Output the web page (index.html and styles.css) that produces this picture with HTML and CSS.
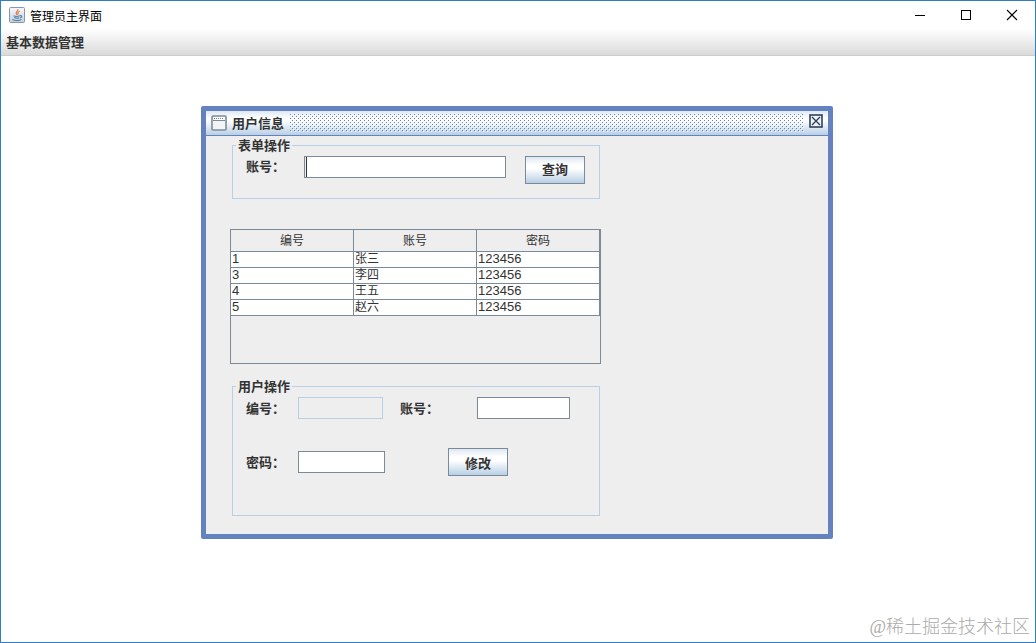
FILE: index.html
```html
<!DOCTYPE html>
<html lang="zh-CN">
<head>
<meta charset="utf-8">
<meta name="viewport" content="width=device-width, initial-scale=1">
<title>管理员主界面</title>
<link rel="stylesheet" href="styles.css">
</head>
<body>
<div class="app">
  <header class="titlebar">
    <svg class="app-icon" width="17" height="17" viewBox="0 0 17 17" aria-hidden="true">
      <defs>
        <linearGradient id="tile" x1="0" y1="0" x2="0" y2="1">
          <stop offset="0" stop-color="#f6f8fa"/><stop offset="1" stop-color="#c3d0dc"/>
        </linearGradient>
      </defs>
      <rect x="0.5" y="0.5" width="15" height="15" rx="1" fill="url(#tile)" stroke="#8797a6"/>
      <path d="M8.8 2.2C9.6 4 6.4 4.8 7.3 6.6L8.3 8M10.6 4.3C8.8 5 8.6 6 9.3 7.4" fill="none" stroke="#e2773a" stroke-width="1.2"/>
      <path d="M4.6 8.8C6 9.6 9 9.5 10.8 8.8M5.2 10.6C7 11.4 8.8 11.3 10.2 10.7M3.4 12.6C6 14 10.6 13.8 12.4 12.4M11 8.7C13.4 8.2 13.2 10.4 11 11" fill="none" stroke="#4d7ea8" stroke-width="1.1"/>
    </svg>
    <h1 class="app-title">管理员主界面</h1>
    <div class="window-buttons">
      <button class="window-button" type="button" aria-label="最小化"><svg width="12" height="12" viewBox="0 0 12 12"><path d="M1 6.5H11" stroke="#000"/></svg></button>
      <button class="window-button" type="button" aria-label="最大化"><svg width="12" height="12" viewBox="0 0 12 12"><rect x="1.5" y="1.5" width="9" height="9" fill="none" stroke="#000"/></svg></button>
      <button class="window-button" type="button" aria-label="关闭"><svg width="12" height="12" viewBox="0 0 12 12"><path d="M1 1L11 11M11 1L1 11" stroke="#000" stroke-width="1.1"/></svg></button>
    </div>
  </header>
  <nav class="menubar"><button class="menu" type="button">基本数据管理</button></nav>
  <main class="desktop">
    <section class="frame">
      <div class="frame-title">
        <svg class="frame-icon" width="16" height="16" viewBox="0 0 16 16" aria-hidden="true">
          <rect x="1" y="1" width="14" height="14" rx="1" fill="#fff" stroke="#7a8a99" stroke-width="1.6"/>
          <path d="M2 5.5H14" stroke="#7a8a99"/>
          <path d="M3 3.5H13" stroke="#7a8a99" stroke-dasharray="1 1"/>
          <path d="M2 6h12v8H2z" fill="#f3f4f5"/>
        </svg>
        <h2 class="frame-name">用户信息</h2>
        <svg class="bumps" aria-hidden="true">
          <defs>
            <pattern id="dots" width="4" height="4" patternUnits="userSpaceOnUse">
              <path d="M1 1h1v1H1zM3 3h1v1H3z" fill="#fff"/>
              <path d="M0 0h1v1H0zM2 2h1v1H2z" fill="#6382bf"/>
            </pattern>
          </defs>
          <rect width="100%" height="100%" fill="url(#dots)"/>
        </svg>
        <button class="frame-close" type="button" aria-label="关闭用户信息">
          <svg width="14" height="14" viewBox="0 0 14 14"><rect x="1" y="1" width="12" height="12" fill="#eef4fa" stroke="#30405c" stroke-width="1.6"/><path d="M3 3L11 11M11 3L3 11" stroke="#30405c" stroke-width="1.4"/></svg>
        </button>
      </div>
      <div class="frame-body">
        <fieldset class="group search-group">
          <legend>表单操作</legend>
          <div class="row search-row">
            <label class="label-wide" for="query">账号：</label>
            <input class="field query-field" id="query" type="text">
            <button class="button" type="button">查询</button>
          </div>
        </fieldset>
        <div class="table-pane">
          <table class="users">
            <thead><tr><th scope="col">编号</th><th scope="col">账号</th><th scope="col">密码</th></tr></thead>
            <tbody>
              <tr><td>1</td><td class="name">张三</td><td>123456</td></tr>
              <tr><td>3</td><td class="name">李四</td><td>123456</td></tr>
              <tr><td>4</td><td class="name">王五</td><td>123456</td></tr>
              <tr><td>5</td><td class="name">赵六</td><td>123456</td></tr>
            </tbody>
          </table>
        </div>
        <fieldset class="group user-group">
          <legend>用户操作</legend>
          <div class="row">
            <label class="label" for="uid">编号：</label>
            <input class="field id-field" id="uid" type="text" disabled>
            <label class="label-account" for="account">账号：</label>
            <input class="field account-field" id="account" type="text">
          </div>
          <div class="row action-row">
            <label class="label" for="password">密码：</label>
            <input class="field password-field" id="password" type="text">
            <button class="button" type="button">修改</button>
          </div>
        </fieldset>
      </div>
    </section>
  </main>
  <div class="watermark">@稀土掘金技术社区</div>
</div>
</body>
</html>
```

FILE: styles.css
```css
* {
  box-sizing: border-box;
}

body {
  margin: 0;
  color: #333;
  font-family: "Liberation Sans", "Noto Sans CJK SC", sans-serif;
  font-size: 13px;
}

h1,
h2 {
  margin: 0;
}

button,
input {
  font: inherit;
  color: inherit;
}

svg {
  display: block;
}

.app {
  position: relative;
  display: flex;
  flex-direction: column;
  min-height: 100vh;
  border: 1px solid #2f80c2;
  background: #fff;
}

.titlebar {
  display: flex;
  align-items: center;
  height: 28px;
  padding-left: 8px;
}

.app-icon {
  margin-right: 4px;
}

.app-title {
  flex: 1;
  color: #000;
  font-size: 12px;
  font-weight: 400;
}

.window-buttons {
  display: flex;
}

.window-button {
  display: flex;
  align-items: center;
  justify-content: center;
  width: 46px;
  height: 28px;
  padding: 0;
  border: 0;
  background: none;
}

.menubar {
  display: flex;
  align-items: center;
  height: 27px;
  padding-bottom: 2px;
  border-bottom: 1px solid #ccc;
  background: linear-gradient(#fff, #dadada);
}

.menu {
  padding: 0 5px;
  border: 0;
  background: none;
  font-weight: 700;
}

.desktop {
  position: relative;
  flex: 1;
}

.frame {
  position: absolute;
  top: 50px;
  left: 200px;
  width: 632px;
  border: 5px solid #6382bf;
  border-radius: 2px;
  background: #eee;
}

.frame-title {
  display: flex;
  align-items: center;
  height: 25px;
  padding: 0 5px;
  border-bottom: 1px solid #6382bf;
  background: linear-gradient(#dde8f3, #fff 30%, #fff 40%, #b8cfe5);
}

.frame-name {
  margin: 0 6px 0 5px;
  padding-bottom: 2px;
  font-size: 13px;
  font-weight: 700;
}

.bumps {
  flex: 1;
  min-width: 0;
  height: 18px;
}

.frame-close {
  margin: 0 0 4px 5px;
  padding: 0;
  border: 0;
  background: none;
}

.frame-body {
  padding: 0 227px 18px 24px;
}

.group {
  min-width: 0;
  margin: 0 1px 0 2px;
  padding: 1px 0 0 13px;
  border: 1px solid #b8cfe5;
}

.group legend {
  margin-left: -10px;
  padding: 0 2px;
  font-weight: 700;
  line-height: 19px;
}

.search-group {
  padding-bottom: 14px;
}

.user-group {
  padding-bottom: 39px;
}

.row {
  display: flex;
  align-items: center;
  min-height: 22px;
  font-weight: 700;
}

.search-row {
  align-items: flex-start;
  line-height: 22px;
}

.action-row {
  margin-top: 29px;
}

.label {
  width: 52px;
  padding-bottom: 2px;
}

.label-wide {
  width: 58px;
}

.label-account {
  width: 77px;
  margin-left: 17px;
  padding-bottom: 2px;
}

.field {
  height: 22px;
  padding: 0 2px;
  border: 1px solid #7a8a99;
  background: #fff;
  font-weight: 400;
}

.field:disabled {
  border-color: #b8cfe5;
  background: #eee;
}

.query-field {
  width: 202px;
  margin-right: 19px;
  box-shadow: inset 1px 0 #eee, inset 2px 0 #333;
}

.id-field {
  width: 85px;
}

.account-field {
  width: 93px;
}

.password-field {
  width: 87px;
  margin-right: 63px;
}

.button {
  width: 60px;
  height: 28px;
  padding: 0;
  border: 1px solid #7a8a99;
  background: linear-gradient(#dde8f3, #fff 30%, #fff 45%, #b8cfe5);
  font-weight: 700;
}

.table-pane {
  height: 135px;
  margin: 30px 0 13px;
  border: 1px solid #7a8a99;
}

.users {
  width: 100%;
  border-collapse: separate;
  border-spacing: 0;
  table-layout: fixed;
  line-height: 14px;
}

.users th,
.users td {
  border-right: 1px solid #7a8a99;
  border-bottom: 1px solid #7a8a99;
}

.users th {
  height: 22px;
  padding: 0;
  font-size: 12px;
  font-weight: 400;
}

.users td {
  height: 16px;
  padding: 0 1px;
  background: #fff;
  text-align: left;
  vertical-align: top;
}

.users .name {
  font-size: 12px;
}

.watermark {
  position: absolute;
  right: 5px;
  bottom: 2px;
  color: #aaa;
  font-family: "Liberation Serif", "Noto Sans CJK SC", serif;
  font-size: 18px;
  font-weight: 300;
  line-height: 26px;
}
```
